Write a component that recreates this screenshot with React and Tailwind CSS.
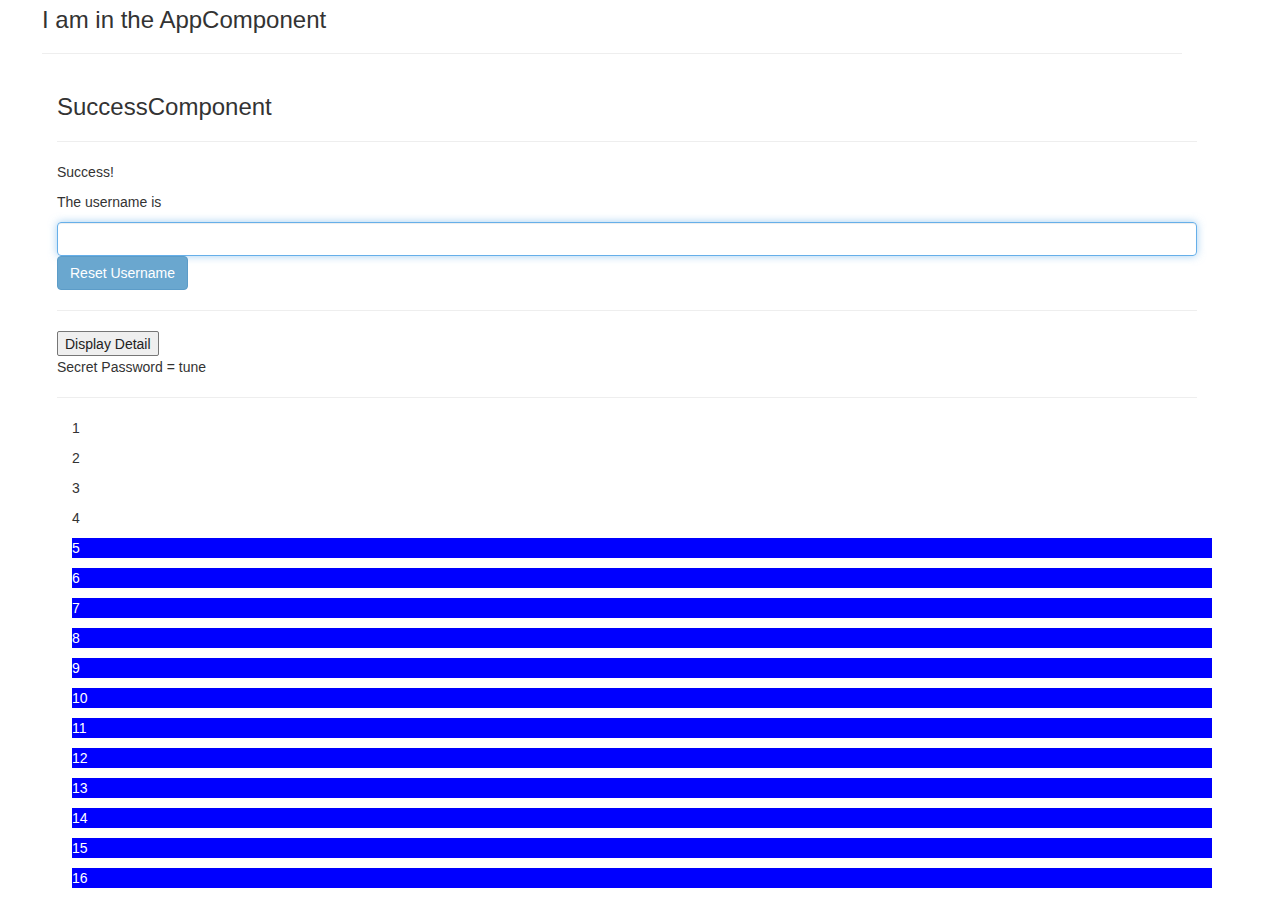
const items = Array.from({ length: 16 }, (_, i) => i + 1);

export default function App() {
  return (
    <div className="min-h-screen bg-white text-[14px] leading-[20px] text-[#333]" style={{ fontFamily: '"Liberation Sans", Arial, sans-serif' }}>
      <div className="ml-[42px] w-[1140px] pt-[7px]">
        <h3 className="text-[24px] leading-[26.4px] font-normal">I am in the AppComponent</h3>
        <hr className="mt-[20px] border-0 border-t border-[#eee]" />

        <div className="ml-[15px] w-[1140px] pt-[40px]">
          <h3 className="text-[24px] leading-[26.4px] font-normal">SuccessComponent</h3>
          <hr className="mt-[20px] mb-[20px] border-0 border-t border-[#eee]" />

          <p className="mb-[10px]">Success!</p>
          <p className="mb-[10px]">The username is</p>
          <input
            autoFocus
            type="text"
            className="block h-[34px] w-full rounded-[4px] border border-[#66afe9] px-[12px] py-[6px] text-[14px] text-[#555] caret-[#333] outline-none shadow-[inset_0_1px_1px_rgba(0,0,0,0.075),0_0_8px_rgba(102,175,233,0.6)]"
          />
          <button className="h-[34px] rounded-[4px] border border-[#5c9cc8] bg-[#6aa7cf] px-[12px] text-[14px] text-white">
            Reset Username
          </button>
          <hr className="mt-[20px] mb-[20px] border-0 border-t border-[#eee]" />

          <button className="block h-[25px] rounded-[2px] border border-[#767676] bg-[#efefef] px-[7px] pt-px text-[14px] leading-[20px] text-[#222]">
            Display Detail
          </button>
          <div className="mt-px">Secret Password = tune</div>
          <hr className="mt-[20px] mb-[20px] border-0 border-t border-[#eee]" />

          <ul className="ml-[15px] w-[1140px]">
            {items.map((n) => (
              <li
                key={n}
                className={n > 4 ? "mb-[10px] h-[20px] bg-[#0000ff] text-white" : "mb-[10px] h-[20px]"}
              >
                {n}
              </li>
            ))}
          </ul>
        </div>
      </div>
    </div>
  );
}
